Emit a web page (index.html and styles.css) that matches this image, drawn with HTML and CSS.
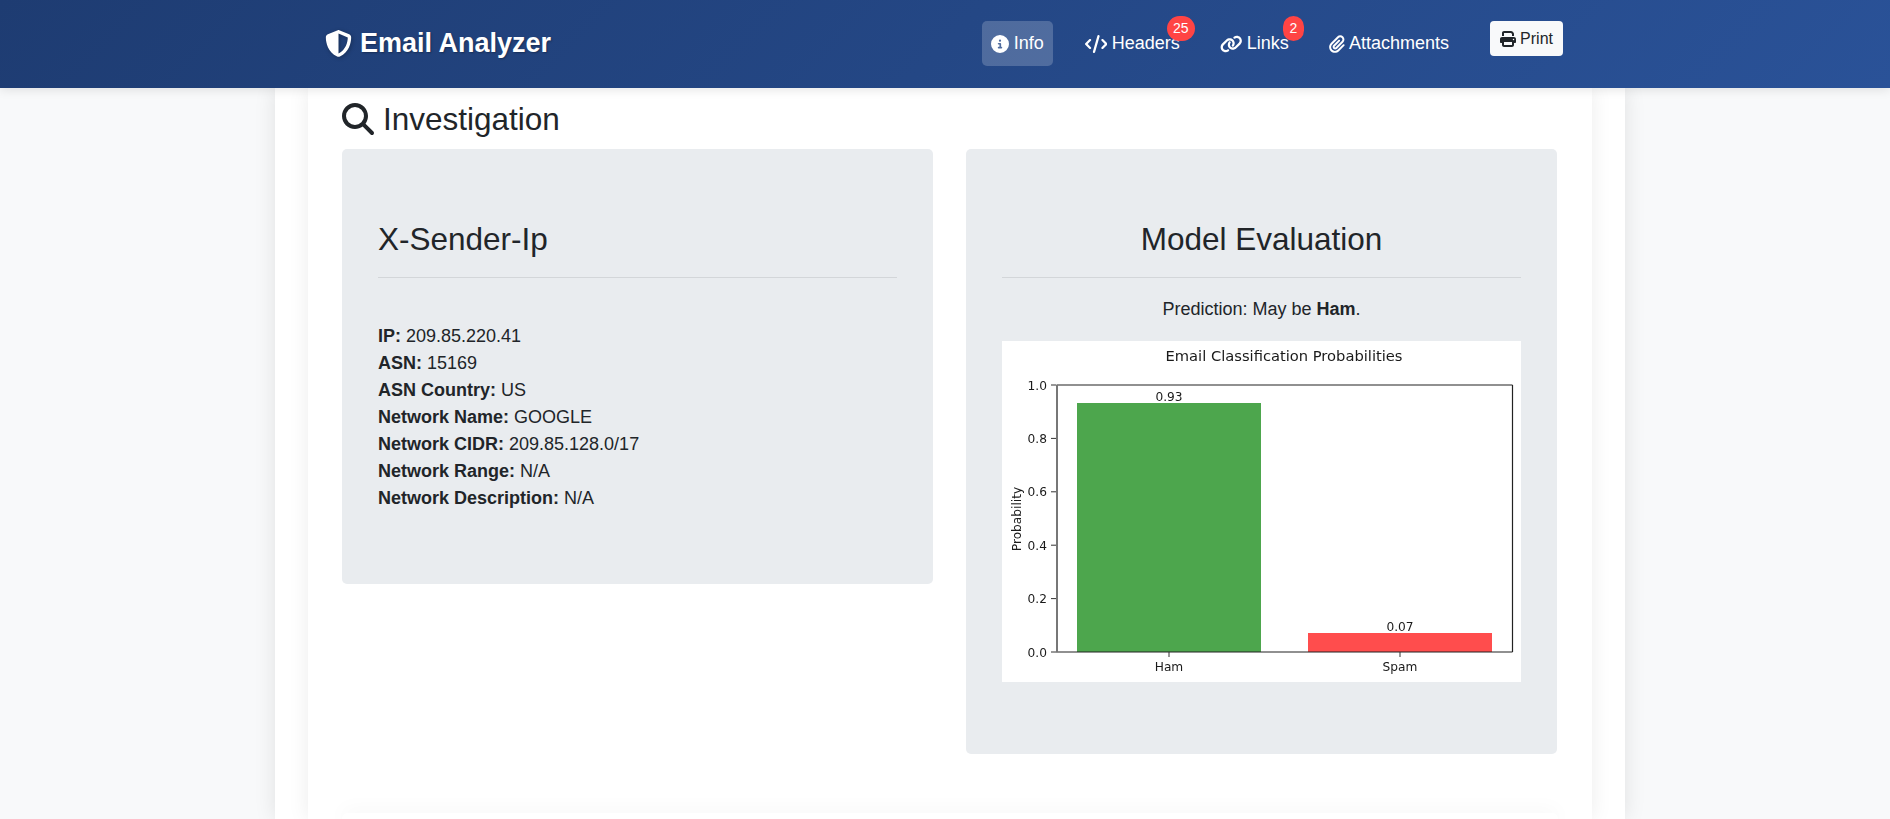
FILE: index.html
```html
<!DOCTYPE html>
<html>
  <head>
    <title>Email Analyzer</title>
    <link rel="stylesheet" href="styles.css">
  </head>
  <body>

	<nav class="navbar">
		<a class="brand">
			<svg class="brand-icon" viewBox="0 0 512 512"><path d="M256 0c4.6 0 9.2 1 13.4 2.9L457.7 82.8c22 9.3 38.4 31 38.3 57.2c-.5 99.2-41.3 280.7-213.6 363.2c-16.7 8-36.1 8-52.8 0C57.3 420.7 16.5 239.2 16 140c-.1-26.2 16.3-47.9 38.3-57.2L242.7 2.9C246.8 1 251.4 0 256 0zm0 66.8V444.8C394 378 431.1 230.1 432 141.4L256 66.8l0 0z"/></svg>
			Email Analyzer
		</a>
		<div class="nav-right">
			<ul class="nav-links">
				<li><a class="nav-link active">
					<svg class="nav-icon" viewBox="0 0 512 512"><path d="M256 512A256 256 0 1 0 256 0a256 256 0 1 0 0 512zM216 336h24V272H216c-13.3 0-24-10.7-24-24s10.7-24 24-24h48c13.3 0 24 10.7 24 24v88h8c13.3 0 24 10.7 24 24s-10.7 24-24 24H216c-13.3 0-24-10.7-24-24s10.7-24 24-24zm40-208a32 32 0 1 1 0 64 32 32 0 1 1 0-64z"/></svg>
					Info</a></li>
				<li><a class="nav-link">
					<svg class="nav-icon icon-wide" viewBox="0 0 640 512"><path d="M392.8 1.2c-17-4.9-34.7 5-39.6 22l-128 448c-4.9 17 5 34.7 22 39.6s34.7-5 39.6-22l128-448c4.9-17-5-34.7-22-39.6zm80.6 120.1c-12.5 12.5-12.5 32.8 0 45.3L562.7 256l-89.4 89.4c-12.5 12.5-12.5 32.8 0 45.3s32.8 12.5 45.3 0l112-112c12.5-12.5 12.5-32.8 0-45.3l-112-112c-12.5-12.5-32.8-12.5-45.3 0zm-306.7 0c-12.5-12.5-32.8-12.5-45.3 0l-112 112c-12.5 12.5-12.5 32.8 0 45.3l112 112c12.5 12.5 32.8 12.5 45.3 0s12.5-32.8 0-45.3L77.3 256l89.4-89.4c12.5-12.5 12.5-32.8 0-45.3z"/></svg>
					Headers<span class="badge badge-wide">25</span></a></li>
				<li><a class="nav-link">
					<svg class="nav-icon icon-wide" viewBox="0 0 640 512"><path d="M579.8 267.7c56.5-56.5 56.5-148 0-204.5c-50-50-128.8-56.5-186.3-15.4l-1.6 1.1c-14.4 10.3-17.7 30.3-7.4 44.6s30.3 17.7 44.6 7.4l1.6-1.1c32.1-22.9 76-19.3 103.8 8.6c31.5 31.5 31.5 82.5 0 114L422.3 334.8c-31.5 31.5-82.5 31.5-114 0c-27.9-27.9-31.5-71.8-8.6-103.8l1.1-1.6c10.3-14.4 6.9-34.4-7.4-44.6s-34.4-6.9-44.6 7.4l-1.1 1.6C206.5 251.2 213 330 263 380c56.5 56.5 148 56.5 204.5 0L579.8 267.7zM60.2 244.3c-56.5 56.5-56.5 148 0 204.5c50 50 128.8 56.5 186.3 15.4l1.6-1.1c14.4-10.3 17.7-30.3 7.4-44.6s-30.3-17.7-44.6-7.4l-1.6 1.1c-32.1 22.9-76 19.3-103.8-8.6C74 372 74 321 105.5 289.5L217.7 177.2c31.5-31.5 82.5-31.5 114 0c27.9 27.9 31.5 71.8 8.6 103.9l-1.1 1.6c-10.3 14.4-6.9 34.4 7.4 44.6s34.4 6.9 44.6-7.4l1.1-1.6C433.5 260.8 427 182 377 132c-56.5-56.5-148-56.5-204.5 0L60.2 244.3z"/></svg>
					Links<span class="badge">2</span></a></li>
				<li><a class="nav-link">
					<svg class="nav-icon icon-clip" viewBox="0 0 448 512"><path d="M364.2 83.8c-24.4-24.4-64-24.4-88.4 0l-184 184c-42.1 42.1-42.1 110.3 0 152.4s110.3 42.1 152.4 0l152-152c10.9-10.9 28.7-10.9 39.6 0s10.9 28.7 0 39.6l-152 152c-64 64-167.6 64-231.6 0s-64-167.6 0-231.6l184-184c46.3-46.3 121.3-46.3 167.6 0s46.3 121.3 0 167.6l-176 176c-28.6 28.6-75 28.6-103.6 0s-28.6-75 0-103.6l144-144c10.9-10.9 28.7-10.9 39.6 0s10.9 28.7 0 39.6l-144 144c-6.7 6.7-6.7 17.7 0 24.4s17.7 6.7 24.4 0l176-176c24.4-24.4 24.4-64 0-88.4z"/></svg>
					Attachments</a></li>
			</ul>
			<button class="btn-print">
				<svg class="print-icon" viewBox="0 0 512 512"><path d="M128 0C92.7 0 64 28.7 64 64v96h64V64H354.7L384 93.3V160h64V93.3c0-17-6.7-33.3-18.7-45.3L400 18.7C388 6.7 371.7 0 354.7 0H128zM384 352v32 64H128V384 368 352H384zm64 32h32c17.7 0 32-14.3 32-32V256c0-35.3-28.7-64-64-64H64c-35.3 0-64 28.7-64 64v96c0 17.7 14.3 32 32 32H64v64c0 35.3 28.7 64 64 64H384c35.3 0 64-28.7 64-64V384zM432 248a24 24 0 1 1 0 48 24 24 0 1 1 0-48z"/></svg>
				Print</button>
		</div>
	</nav>

	<main class="page">
		<div class="card">
			<h2 class="section-title">
				<svg class="search-icon" viewBox="0 0 512 512"><path d="M416 208c0 45.9-14.9 88.3-40 122.7L502.6 457.4c12.5 12.5 12.5 32.8 0 45.3s-32.8 12.5-45.3 0L330.7 376c-34.4 25.2-76.8 40-122.7 40C93.1 416 0 322.9 0 208S93.1 0 208 0S416 93.1 416 208zM208 352a144 144 0 1 0 0-288 144 144 0 1 0 0 288z"/></svg>
				<span class="section-text">Investigation</span>
			</h2>
			<div class="columns">
				<section class="jumbotron jumbotron-left">
					<h3 class="panel-title">X-Sender-Ip</h3>
					<hr class="divider">
					<div class="facts">
						<div><b>IP:</b> 209.85.220.41</div>
						<div><b>ASN:</b> 15169</div>
						<div><b>ASN Country:</b> US</div>
						<div><b>Network Name:</b> GOOGLE</div>
						<div><b>Network CIDR:</b> 209.85.128.0/17</div>
						<div><b>Network Range:</b> N/A</div>
						<div><b>Network Description:</b> N/A</div>
					</div>
				</section>
				<section class="jumbotron jumbotron-center">
					<h3 class="panel-title">Model Evaluation</h3>
					<hr class="divider">
					<p class="prediction">Prediction: May be <b>Ham</b>.</p>
					<svg class="chart" viewBox="0 0 519 341">
						<g class="chart-body">
							<rect class="bar-ham" x="75" y="62" width="184" height="249"/>
							<rect class="bar-spam" x="306" y="292" width="184" height="19"/>
							<line class="axis" x1="54.5" y1="44" x2="510.5" y2="44"/>
							<line class="axis" x1="510.5" y1="44" x2="510.5" y2="311"/>
							<line class="axis" x1="54" y1="311" x2="510.5" y2="311"/>
							<line class="axis-left" x1="55" y1="44" x2="55" y2="311"/>
							<g class="ticks">
								<line x1="49" y1="44" x2="54" y2="44"/>
								<line x1="49" y1="97.4" x2="54" y2="97.4"/>
								<line x1="49" y1="150.8" x2="54" y2="150.8"/>
								<line x1="49" y1="204.2" x2="54" y2="204.2"/>
								<line x1="49" y1="257.6" x2="54" y2="257.6"/>
								<line x1="49" y1="311" x2="54" y2="311"/>
								<line x1="167" y1="311" x2="167" y2="316"/>
								<line x1="398" y1="311" x2="398" y2="316"/>
							</g>
							<text class="chart-title" x="282" y="20">Email Classification Probabilities</text>
							<g class="y-labels">
								<text x="45" y="48.5">1.0</text>
								<text x="45" y="101.9">0.8</text>
								<text x="45" y="155.3">0.6</text>
								<text x="45" y="208.7">0.4</text>
								<text x="45" y="262.1">0.2</text>
								<text x="45" y="315.5">0.0</text>
							</g>
							<g class="x-labels">
								<text x="167" y="60">0.93</text>
								<text x="398" y="290">0.07</text>
								<text x="167" y="330">Ham</text>
								<text x="398" y="330">Spam</text>
								<text x="0" y="0" transform="translate(19 178) rotate(-90)">Probability</text>
							</g>
						</g>
					</svg>
				</section>
			</div>
			<section class="next-card"></section>
		</div>
	</main>

  </body>
</html>
```

FILE: styles.css
```css
html, body { height: 100%; }
body { margin: 0; background: #f8f9fa; color: #212529; font-family: "Liberation Sans", Arial, sans-serif; font-size: 18px; overflow: hidden; }

.navbar { position: relative; z-index: 2; height: 88px; box-sizing: border-box; padding: 21px 327px 0 325px; display: flex; justify-content: space-between; align-items: flex-start; background: linear-gradient(135deg, #1e3c72, #2a5298); box-shadow: 0 2px 10px rgba(0, 0, 0, 0.1); }
.brand { display: flex; align-items: center; gap: 8px; height: 45px; color: #fff; font-size: 27px; font-weight: 700; text-shadow: 1px 1px 2px rgba(0, 0, 0, 0.3); }
.brand-icon { width: 27px; height: 27px; fill: #fff; filter: drop-shadow(1px 1px 2px rgba(0, 0, 0, 0.3)); }

.nav-right { display: flex; align-items: flex-start; gap: 32px; }
.nav-links { display: flex; gap: 22px; list-style: none; margin: 0; padding: 0; }
.nav-links li:first-child { margin-right: 1px; }
.nav-link { position: relative; display: flex; align-items: center; gap: 4.5px; height: 45px; box-sizing: border-box; padding: 0 9px; border-radius: 5px; color: #fff; font-size: 18px; }
.nav-link.active { background: rgba(255, 255, 255, 0.2); }
.nav-icon { width: 18px; height: 18px; fill: #fff; }
.icon-wide { width: 22.5px; }
.icon-clip { width: 15.75px; }
.badge { position: absolute; top: -5px; right: -6px; min-width: 21px; height: 25px; border-radius: 13px; background: #ff4444; color: #fff; font-size: 14px; line-height: 25px; text-align: center; }
.badge-wide { min-width: 28px; }

.btn-print { display: flex; align-items: center; gap: 4px; height: 35px; padding: 0 10px; border: none; border-radius: 4px; background: #f8f9fa; color: #212529; font-family: inherit; font-size: 16px; }
.print-icon { width: 16px; height: 16px; fill: #212529; }

.page { width: 1350px; height: calc(100% - 88px); margin: 0 0 0 275px; padding: 0 33px; box-sizing: border-box; background: #fff; box-shadow: 0 0 20px rgba(0, 0, 0, 0.1); }
.card { height: 100%; padding: 0 34px; background: #fff; box-shadow: 0 0 20px rgba(0, 0, 0, 0.08); }

.section-title { display: flex; align-items: center; gap: 9px; height: 61px; margin: 0; font-size: 31.5px; font-weight: 400; line-height: 1; }
.section-text { padding-top: 3px; }
.search-icon { width: 32px; height: 32px; fill: #212529; }

.columns { display: grid; grid-template-columns: 591px 591px; column-gap: 33px; align-items: start; }
.jumbotron { box-sizing: border-box; padding: 72px 36px; border-radius: 5px; background: #e9ecef; }
.jumbotron-left { height: 435px; }
.jumbotron-center { height: 605px; text-align: center; }
.panel-title { margin: 0; height: 36px; font-size: 31.5px; font-weight: 400; line-height: 36px; }
.divider { margin: 20px 0 0; border: none; border-top: 1px solid #d3d6d9; }
.facts { margin-top: 45px; line-height: 27px; }
.prediction { margin: 18px 0 0; line-height: 27px; }

.chart { display: block; width: 519px; height: 341px; margin-top: 18px; background: #fff; }
.chart-body { filter: blur(0.3px); }
.chart text { font-family: "DejaVu Sans", sans-serif; fill: #1a1a1a; }
.bar-ham { fill: #4da64d; }
.bar-spam { fill: #ff4d4d; }
.axis { stroke: #222; stroke-width: 1.2; }
.axis-left { stroke: #777; stroke-width: 2; }
.ticks line { stroke: #333; stroke-width: 1; }
.chart-title { font-size: 14.7px; text-anchor: middle; }
.y-labels text { font-size: 12.2px; text-anchor: end; }
.x-labels text { font-size: 12.2px; text-anchor: middle; }

.next-card { height: 6px; margin-top: 59px; border-radius: 10px 10px 0 0; background: #fff; box-shadow: 0 0 20px rgba(0, 0, 0, 0.08); }
```
